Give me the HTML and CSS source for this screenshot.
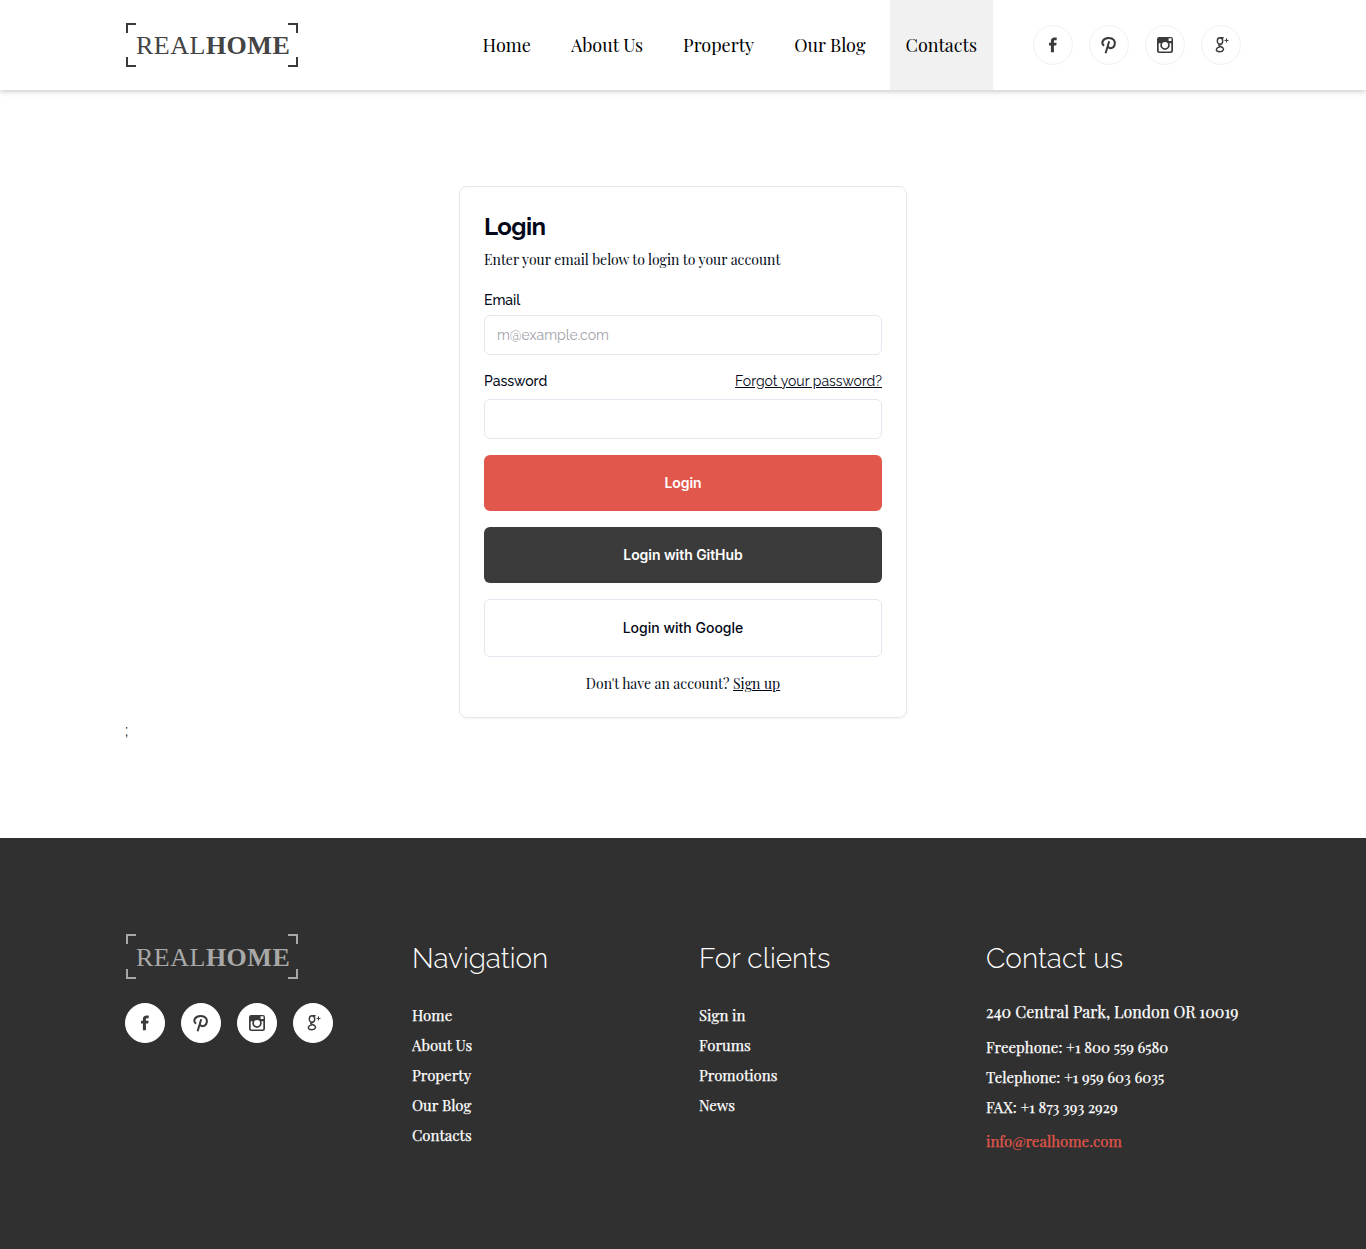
FILE: index.html
```html
<!DOCTYPE html>
<html lang="en">
<head>
<meta charset="utf-8">
<title>RealHome - Login</title>
<link rel="stylesheet" href="styles.css">
</head>
<body>
<svg class="sprite" aria-hidden="true">
  <symbol id="facebook" viewBox="0 0 18 18"><path d="M6.900 16.200V9.500H5V6.800h1.900V5.100c0-2.400 1.400-3.700 3.500-3.700h2.300v2.800h-1.500c-1 0-1.300.5-1.300 1.300v1.300h2.700l-.4 2.700H9.900v6.700z" fill="currentColor"/></symbol>
  <symbol id="pinterest" viewBox="0 0 18 18"><path d="M4.100 9.700C.6 7.300 2.600 2 8.500 1.900c5-.1 7 3.300 6.200 6.600-1.100 4.300-5.200 4.500-6.500 2.200M9.200 5.200 5.600 17.200" fill="none" stroke="currentColor" stroke-width="2"/></symbol>
  <symbol id="instagram" viewBox="0 0 18 18"><path fill-rule="evenodd" d="M3.200 1h11.600A2.200 2.200 0 0 1 17 3.200v11.600a2.200 2.200 0 0 1-2.200 2.200H3.200A2.200 2.200 0 0 1 1 14.800V3.200A2.200 2.200 0 0 1 3.200 1zM12.600 2.300v2.600h2.900V2.300zM2.700 7.300v7.100c0 .6.400 1 1 1h10.600c.6 0 1-.4 1-1V7.300h-2a4.700 4.700 0 1 1-8.600 0zM9 6a3.100 3.100 0 1 0 0 6.200A3.100 3.100 0 0 0 9 6z" fill="currentColor"/></symbol>
  <symbol id="google" viewBox="0 0 18 18"><g fill="none" stroke="currentColor"><ellipse cx="8" cy="5" rx="2.700" ry="3.200" stroke-width="1.400"/><path d="M8.400 1.800h3.200M9.300 8.200C6 8.800 6 9.700 8.400 10.500c5.600 1.900 2.600 5.300-.9 5.300-4.200 0-4.300-3.900.5-4.900" stroke-width="1.400"/><path d="M14.500 2.400v4M12.500 4.400h4" stroke-width="1"/></g></symbol>
</svg>
<header class="header">
  <div class="container header-row">
    <a class="logo"><span>REAL<b>HOME</b></span><i></i></a>
    <nav class="nav">
      <a>Home</a><a>About Us</a><a>Property</a><a>Our Blog</a><a class="active">Contacts</a>
    </nav>
    <div class="social">
      <a><svg><use href="#facebook"/></svg></a><a><svg><use href="#pinterest"/></svg></a><a><svg><use href="#instagram"/></svg></a><a><svg><use href="#google"/></svg></a>
    </div>
  </div>
</header>
<main class="container main">
  <form class="card">
    <h1>Login</h1>
    <p class="intro">Enter your email below to login to your account</p>
    <label class="label">Email</label>
    <input class="field" type="email" placeholder="m@example.com">
    <div class="password-row"><label>Password</label><a>Forgot your password?</a></div>
    <input class="field" type="password">
    <button class="button primary" type="button">Login</button>
    <button class="button dark" type="button">Login with GitHub</button>
    <button class="button outline" type="button">Login with Google</button>
    <p class="signup">Don't have an account? <a>Sign up</a></p>
  </form>
  <div class="stray">;</div>
</main>
<footer class="footer">
  <div class="container footer-grid">
    <div>
      <a class="logo logo-light"><span>REAL<b>HOME</b></span><i></i></a>
      <div class="social social-solid">
        <a><svg><use href="#facebook"/></svg></a><a><svg><use href="#pinterest"/></svg></a><a><svg><use href="#instagram"/></svg></a><a><svg><use href="#google"/></svg></a>
      </div>
    </div>
    <div>
      <h2>Navigation</h2>
      <ul class="links"><li>Home</li><li>About Us</li><li>Property</li><li>Our Blog</li><li>Contacts</li></ul>
    </div>
    <div>
      <h2>For clients</h2>
      <ul class="links"><li>Sign in</li><li>Forums</li><li>Promotions</li><li>News</li></ul>
    </div>
    <div>
      <h2>Contact us</h2>
      <p class="address">240 Central Park, London OR 10019</p>
      <ul class="links"><li>Freephone: +1 800 559 6580</li><li>Telephone: +1 959 603 6035</li><li>FAX: +1 873 393 2929</li></ul>
      <a class="mail">info@realhome.com</a>
    </div>
  </div>
</footer>
</body>
</html>
```
FILE: styles.css
```css
*, *::before, *::after { box-sizing: border-box; margin: 0; padding: 0; }
body { background: #fff; color: #020817; font-family: "Playfair Display", "Liberation Serif", serif; font-size: 16px; line-height: 24px; }
ul { list-style: none; }
.sprite { display: none; }
.container { width: 1116px; margin: 0 auto; }
.header { height: 90px; background: #fff; box-shadow: 0 1px 6px rgba(0, 0, 0, .25); }
.header-row { display: flex; align-items: center; height: 90px; }

.logo { --mark: #3a3a3a; position: relative; display: flex; align-items: center; width: 172px; height: 44px; margin-left: 1px; padding: 2px 0 0 10px; color: #444; font: 26px/44px "Liberation Serif", serif; letter-spacing: .5px; white-space: nowrap; }
.logo::before, .logo::after, .logo i::before, .logo i::after { content: ""; position: absolute; width: 10px; height: 10px; border: 0 solid var(--mark); }
.logo::before { left: 0; top: 0; border-width: 2px 0 0 2px; }
.logo::after { right: 0; top: 0; border-width: 2px 2px 0 0; }
.logo i::before { left: 0; bottom: 0; border-width: 0 0 2px 2px; }
.logo i::after { right: 0; bottom: 0; border-width: 0 2px 2px 0; }
.logo-light { --mark: #a8a8a8; height: 45px; color: #a8a8a8; }

.nav { display: flex; justify-content: flex-end; gap: 8px; width: 695px; color: #000; font-size: 18px; line-height: 90px; }
.nav a { padding: 0 16px; white-space: nowrap; }
.nav .active { background: #f1f1f1; }

.social { display: flex; gap: 16px; margin-left: 40px; color: #3a3a3a; }
.social a { display: flex; align-items: center; justify-content: center; width: 40px; height: 40px; border: 1px solid #f1f1f1; border-radius: 50%; }
.social svg { width: 18px; height: 18px; }
.social-solid { margin: 24px 0 0; }
.social-solid a { border-color: #fff; background: #fff; }

.main { padding: 96px 0; }
.card { display: flex; flex-direction: column; width: 448px; height: 532px; margin: 0 auto; padding: 24px; border: 1px solid #e2e8f0; border-radius: 8px; box-shadow: 0 1px 2px rgba(0, 0, 0, .05); font-size: 14px; line-height: 20px; }
.card > * { flex-shrink: 0; }
.card h1 { font: 700 24px/32px Raleway, Lato, sans-serif; letter-spacing: -.6px; }
.intro { margin: 7px 0 23px; }
.label, .password-row { font-family: Raleway, Lato, sans-serif; }
.label { margin-bottom: 8px; font-weight: 500; line-height: 14px; }
.password-row { display: flex; justify-content: space-between; margin: 16px 0 8px; }
.password-row label { font-weight: 500; }
.password-row a { text-decoration: underline; }
.field { display: block; width: 100%; height: 40px; padding: 0 12px; border: 1px solid #e2e8f0; border-radius: 6px; background: #fff; font: 14px Raleway, Lato, sans-serif; }
.field::placeholder { color: #a1a1aa; opacity: 1; }
.button { height: 56px; margin-top: 16px; border: 0; border-radius: 6px; background: #fff; color: #fff; font: 600 14px/20px Inter, sans-serif; letter-spacing: -.05px; }
.primary { background: #e2574c; }
.dark { background: #3b3b3b; }
.outline { height: 58px; border: 1px solid #e2e8f0; color: #020817; font-weight: 500; letter-spacing: 0; }
.signup { margin-top: 17px; text-align: center; }
.signup a { text-decoration: underline; }
.stray { height: 24px; padding-top: 1px; color: #000; font-family: Raleway, Lato, sans-serif; }

.footer { height: 411px; padding-top: 96px; background: #303030; color: #fff; }
.footer-grid { display: grid; grid-template-columns: repeat(4, 255px); gap: 32px; }
.footer h2 { height: 66px; font: 300 28px/50px Raleway, Lato, sans-serif; white-space: nowrap; }
.links, .mail { font-size: 15px; line-height: 30px; }
.links, .mail, .address { -webkit-text-stroke: .25px currentColor; white-space: nowrap; }
.address { margin-bottom: 8px; line-height: 24px; }
.mail { display: block; margin-top: 4px; color: #e2574c; }
```
